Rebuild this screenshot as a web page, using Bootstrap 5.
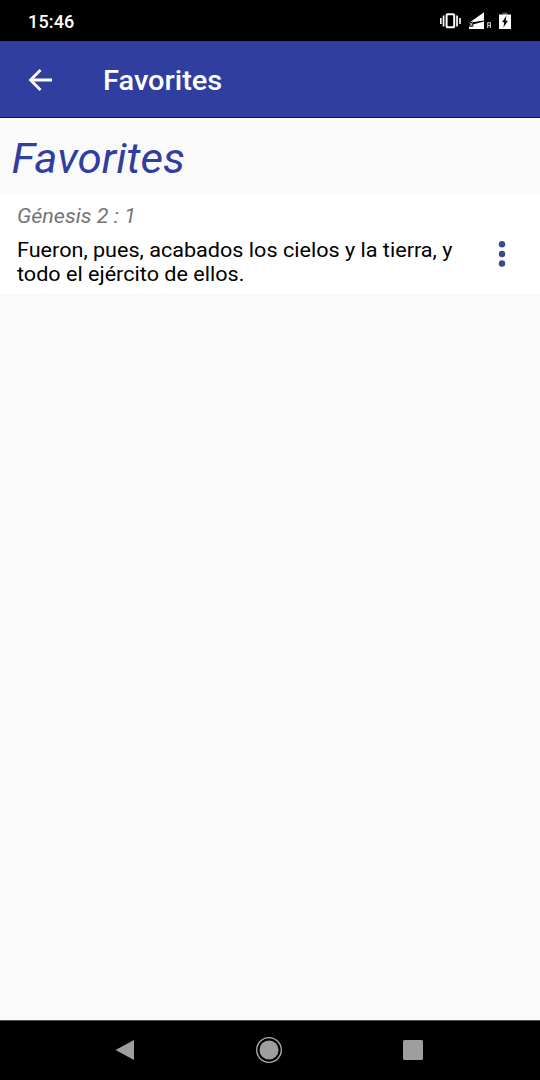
<!DOCTYPE html>
<html lang="es">
<head>
<meta charset="utf-8">
<meta name="viewport" content="width=device-width, initial-scale=1">
<title>Favorites</title>
<link href="https://cdn.jsdelivr.net/npm/bootstrap@5.3.0/dist/css/bootstrap.min.css" rel="stylesheet">
<style>
body{font-family:Roboto,"Liberation Sans",sans-serif;background:#fafafa;color:#000}
svg{display:block}
.status-bar{height:41px;background:#000;color:#fff;padding:1px 27px 0 28px;font-size:18px;font-weight:500;line-height:41px;letter-spacing:.15px}
.app-bar{height:77px;background:#303f9f;color:#fff;padding:0 28px;border-top:1px solid #343a86;border-bottom:1px solid #10133c}
.app-title,.page-title,.verse-ref,.verse-text{transform-origin:0 0}
.app-title{font-size:28px;font-weight:500;line-height:32px;margin:3px 0 0 51px;transform:scaleX(1.035)}
.page-title{height:76px;padding:16px 0 0 11px;font-size:42px;line-height:50px;font-style:italic;color:#303f9f;transform:scaleX(1.045)}
.verse-row{height:99px;background:#fff;padding:10px 34px 0 17px}
.verse-ref{font-size:21px;line-height:25px;font-style:italic;color:#757575;transform:scaleX(1.025)}
.verse-text{font-size:21px;line-height:24.4px;margin-top:8.6px;white-space:nowrap;transform:scaleX(1.028)}
.nav-keys{height:60px;background:#000;border-top:1px solid #4d5452;padding:0 117px 2px 115px}
</style>
</head>
<body>
<div class="d-flex flex-column vh-100 overflow-hidden">
  <div class="status-bar d-flex justify-content-between align-items-center">
    <span>15:46</span>
    <svg width="73" height="20" viewBox="440 11 73 20" fill="#fff">
      <path d="M440 18h1.6v6H440zM442.7 15.5h1.7v11h-1.7zM456.2 15.5h1.7v11h-1.7zM459.2 18h1.6v6h-1.6z"/>
      <rect x="446.6" y="14.3" width="7.6" height="13" rx=".8" fill="none" stroke="#fff" stroke-width="2"/>
      <path d="M484 12.5v7.8l-14.2 2.2zM484 21.6V29h-15z"/>
      <path d="M484 12.5v7.8l-14.2 2.2zM484 21.6V29h-15v-3.5z"/>
      <path d="m469.3 22 3.6 4.5M472.9 22l-3.6 4.5" stroke="#000" stroke-width="2.4"/>
      <path d="m469.8 22.5 2.8 3.6M472.6 22.5l-2.8 3.6" stroke="#ddd" stroke-width=".9"/>
      <path d="M487.7 28v-5.2h2.7v2.7h-2.7M490.4 25.5V28" fill="none" stroke="#ccc" stroke-width="1.1"/>
      <path d="M502.5 12.5h5V15h-5z" fill="#555"/>
      <path d="M499 14.5h12V29h-12z"/>
      <path d="m506.4 15.8-4.3 6.4h2.2l-.9 5.2 4.5-6.6h-2.3z" fill="#000"/>
    </svg>
  </div>
  <header class="app-bar d-flex align-items-center">
    <svg width="24" height="24" viewBox="0 0 24 24" fill="none" stroke="#fff" stroke-width="2.8"><path d="M24 12H2.5M12.5 2 2.5 12l10 10"/></svg>
    <div class="app-title">Favorites</div>
  </header>
  <main class="flex-grow-1">
    <h1 class="page-title m-0 fw-normal">Favorites</h1>
    <article class="verse-row d-flex justify-content-between">
      <div>
        <div class="verse-ref">Génesis 2 : 1</div>
        <div class="verse-text">Fueron, pues, acabados los cielos y la tierra, y<br>todo el ejército de ellos.</div>
      </div>
      <svg width="8" height="28" viewBox="0 0 8 28" fill="#354b91" style="margin-top:36px"><circle cx="4" cy="4.3" r="3.2"/><circle cx="4" cy="14" r="3.2"/><circle cx="4" cy="23.5" r="3.2"/></svg>
    </article>
  </main>
  <nav class="nav-keys d-flex justify-content-between align-items-center">
    <svg width="20" height="22" viewBox="0 0 20 22" fill="#9e9e9e"><path d="M.5 11 19 1v20z"/></svg>
    <svg width="28" height="28" viewBox="0 0 28 28"><circle cx="14" cy="14" r="12.3" fill="none" stroke="#b0b0b0" stroke-width="1.3"/><circle cx="14" cy="14" r="9.5" fill="#9e9e9e"/></svg>
    <svg width="20" height="20" viewBox="0 0 20 20"><rect width="20" height="20" rx="1.5" fill="#9e9e9e"/></svg>
  </nav>
</div>
<script src="https://cdn.jsdelivr.net/npm/bootstrap@5.3.0/dist/js/bootstrap.bundle.min.js"></script>
</body>
</html>
